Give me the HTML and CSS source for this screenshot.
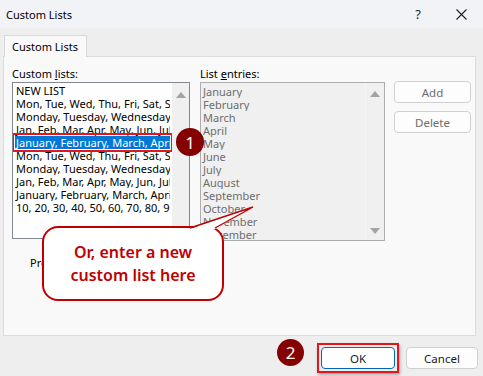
FILE: index.html
```html
<!DOCTYPE html>
<html lang="en">
  <head>
    <meta charset="UTF-8" />
    <meta name="viewport" content="width=device-width, initial-scale=1.0" />
    <title>Custom Lists</title>
    <link rel="stylesheet" href="styles.css">
  </head>
  <body>
    <div class="window">
      <!-- Title bar -->
      <div class="titlebar">
        <span class="title">Custom Lists</span>
        <span class="help">?</span>
        <span class="close">
          <svg width="11" height="11" viewBox="0 0 11 11">
            <path d="M0.5 0.5 L10.5 10.5 M10.5 0.5 L0.5 10.5" stroke="#1f1f1f" stroke-width="1.1" fill="none" />
          </svg>
        </span>
      </div>

      <div class="content">
        <div class="tabs">
          <div class="tab">Custom Lists</div>
        </div>

        <div class="panel">
          <div class="col-left">
            <div class="label">Custom <u>l</u>ists:</div>
            <div class="listbox">
              <ul class="items">
                <li>NEW LIST</li>
                <li>Mon, Tue, Wed, Thu, Fri, Sat, Sun</li>
                <li>Monday, Tuesday, Wednesday, Thursday</li>
                <li>Jan, Feb, Mar, Apr, May, Jun, Jul, Aug</li>
                <li class="selected">January, February, March, April, May</li>
                <li>Mon, Tue, Wed, Thu, Fri, Sat, Sun</li>
                <li>Monday, Tuesday, Wednesday, Thursday</li>
                <li>Jan, Feb, Mar, Apr, May, Jun, Jul, Aug</li>
                <li>January, February, March, April, May</li>
                <li>10, 20, 30, 40, 50, 60, 70, 80, 90, 100</li>
              </ul>
              <div class="scrollbar">
                <span class="arrow up"></span>
                <span class="arrow down"></span>
              </div>
            </div>
            <p class="hint">Press Enter to separate.</p>
          </div>

          <div class="col-mid">
            <div class="label">List <u>e</u>ntries:</div>
            <div class="listbox disabled">
              <ul class="items">
                <li>January</li>
                <li>February</li>
                <li>March</li>
                <li>April</li>
                <li>May</li>
                <li>June</li>
                <li>July</li>
                <li>August</li>
                <li>September</li>
                <li>October</li>
                <li>November</li>
                <li>December</li>
              </ul>
              <div class="scrollbar">
                <span class="arrow up"></span>
                <span class="arrow down"></span>
              </div>
            </div>
          </div>

          <div class="col-buttons">
            <button class="btn" disabled>Add</button>
            <button class="btn" disabled>Delete</button>
          </div>
        </div>

        <div class="footer">
          <span class="highlight"><button class="btn ok">OK</button></span>
          <button class="btn">Cancel</button>
        </div>
      </div>

      <!-- annotations -->
      <div class="callout">Or, enter a new<br />custom list here</div>
      <svg class="pointer" width="72" height="30" viewBox="0 0 72 30">
        <polygon points="4,26 67,4 29,26" fill="#fff" />
        <polyline points="4,25 67,4 29,25" fill="none" stroke="#c00000" stroke-width="1.4" />
      </svg>
      <div class="badge b1">1</div>
      <div class="badge b2">2</div>
    </div>
  </body>
</html>
```

FILE: styles.css
```css
* {
  margin: 0;
  padding: 0;
  box-sizing: border-box;
  font-family: "Noto Sans", Arial, sans-serif;
}
body {
  width: 483px;
  height: 376px;
  overflow: hidden;
  background: #eeeeee;
}
.window {
  position: relative;
  width: 483px;
  height: 376px;
  font-size: 11px;
  color: #000;
}
.titlebar {
  height: 28px;
  display: flex;
  align-items: center;
  background: #f2f3f7;
  padding-left: 6px;
  font-size: 11px;
}
.title {
  flex: 1;
}
.help {
  font-size: 13px;
  color: #1f1f1f;
  margin-right: 35px;
}
.close {
  display: flex;
  margin-right: 16px;
}
.content {
  padding: 7px 7px 0 3px;
}
.tabs {
  display: flex;
  padding-left: 1px;
}
.tab {
  height: 22px;
  line-height: 21px;
  padding: 0 8px 0 7px;
  background: #f9f9f9;
  border: 1px solid #d9d9d9;
  border-bottom: none;
  position: relative;
  z-index: 1;
  font-size: 11px;
}
.panel {
  margin-top: -1px;
  height: 280px;
  background: #f9f9f9;
  border: 1px solid #dcdcdc;
  display: flex;
  padding: 9px 0 0 8px;
}
.label {
  height: 16px;
  line-height: 15px;
}
.label u {
  text-underline-offset: 1px;
}
.col-left {
  width: 178px;
}
.col-mid {
  width: 185px;
  margin-left: 10px;
}
.col-buttons {
  width: 77px;
  margin-left: 9px;
  padding-top: 15px;
  display: flex;
  flex-direction: column;
  gap: 8px;
}
.listbox {
  display: flex;
  height: 157px;
  border: 1px solid #828790;
  background: #fff;
  overflow: hidden;
}
.items {
  list-style: none;
  flex: 1;
  overflow: hidden;
  padding-top: 1px;
}
.items li {
  height: 13px;
  line-height: 13px;
  white-space: nowrap;
  overflow: hidden;
  margin: 0 2px;
  padding-left: 1px;
}
.items li.selected {
  background: #0078d7;
  color: #fff;
  outline: 2px solid #e8141b;
  outline-offset: 1px;
}
.scrollbar {
  width: 17px;
  background: #f0f0f0;
  display: flex;
  flex-direction: column;
  justify-content: space-between;
  align-items: center;
  padding: 9px 0 5px;
}
.arrow {
  width: 0;
  height: 0;
  border-left: 5px solid transparent;
  border-right: 5px solid transparent;
}
.arrow.up {
  border-bottom: 6px solid #a3a3a3;
}
.arrow.down {
  border-top: 6px solid #a3a3a3;
}
.listbox.disabled {
  height: 159px;
  background: #f0f0f0;
  border-color: #adadad;
}
.listbox.disabled .items {
  padding-top: 2px;
}
.listbox.disabled .items li {
  color: #6d6d6d;
  margin: 0;
  padding-left: 2px;
}
.listbox.disabled .scrollbar {
  width: 19px;
  border-left: 1px solid #f6f6f6;
  padding: 8px 0 6px;
}
.hint {
  margin: 16px 0 0 18px;
  line-height: 15px;
}
.btn {
  height: 22px;
  background: #fdfdfd;
  border: 1px solid #d0d0d0;
  border-radius: 4px;
  font-size: 11.5px;
  color: #1a1a1a;
}
.btn:disabled {
  color: #6d6d6d;
}
.footer {
  display: flex;
  justify-content: flex-end;
  align-items: center;
  gap: 7px;
  padding: 7px 0 0;
  margin-right: -2px;
}
.footer .btn {
  width: 72px;
}
.highlight {
  display: flex;
  border: 2px solid #e8141b;
  padding: 2px;
  box-shadow: 1px 2px 3px rgba(0, 0, 0, 0.3);
}
.footer .btn.ok {
  width: 74px;
  background: #fff;
  border-color: #0067c0;
}
.callout {
  position: absolute;
  left: 42px;
  top: 226px;
  width: 182px;
  height: 75px;
  background: #fff;
  border: 2px solid #c00000;
  border-radius: 16px;
  display: flex;
  align-items: center;
  justify-content: center;
  text-align: center;
  color: #c00000;
  font-size: 16px;
  font-weight: 600;
  line-height: 23px;
}
.pointer {
  position: absolute;
  left: 186px;
  top: 203px;
}
.badge {
  position: absolute;
  border-radius: 50%;
  background: #850000;
  color: #fff;
  display: flex;
  align-items: center;
  justify-content: center;
  font-size: 17px;
}
.b1 {
  left: 176px;
  top: 128px;
  width: 28px;
  height: 28px;
}
.b2 {
  left: 277px;
  top: 339px;
  width: 27px;
  height: 27px;
}
```
